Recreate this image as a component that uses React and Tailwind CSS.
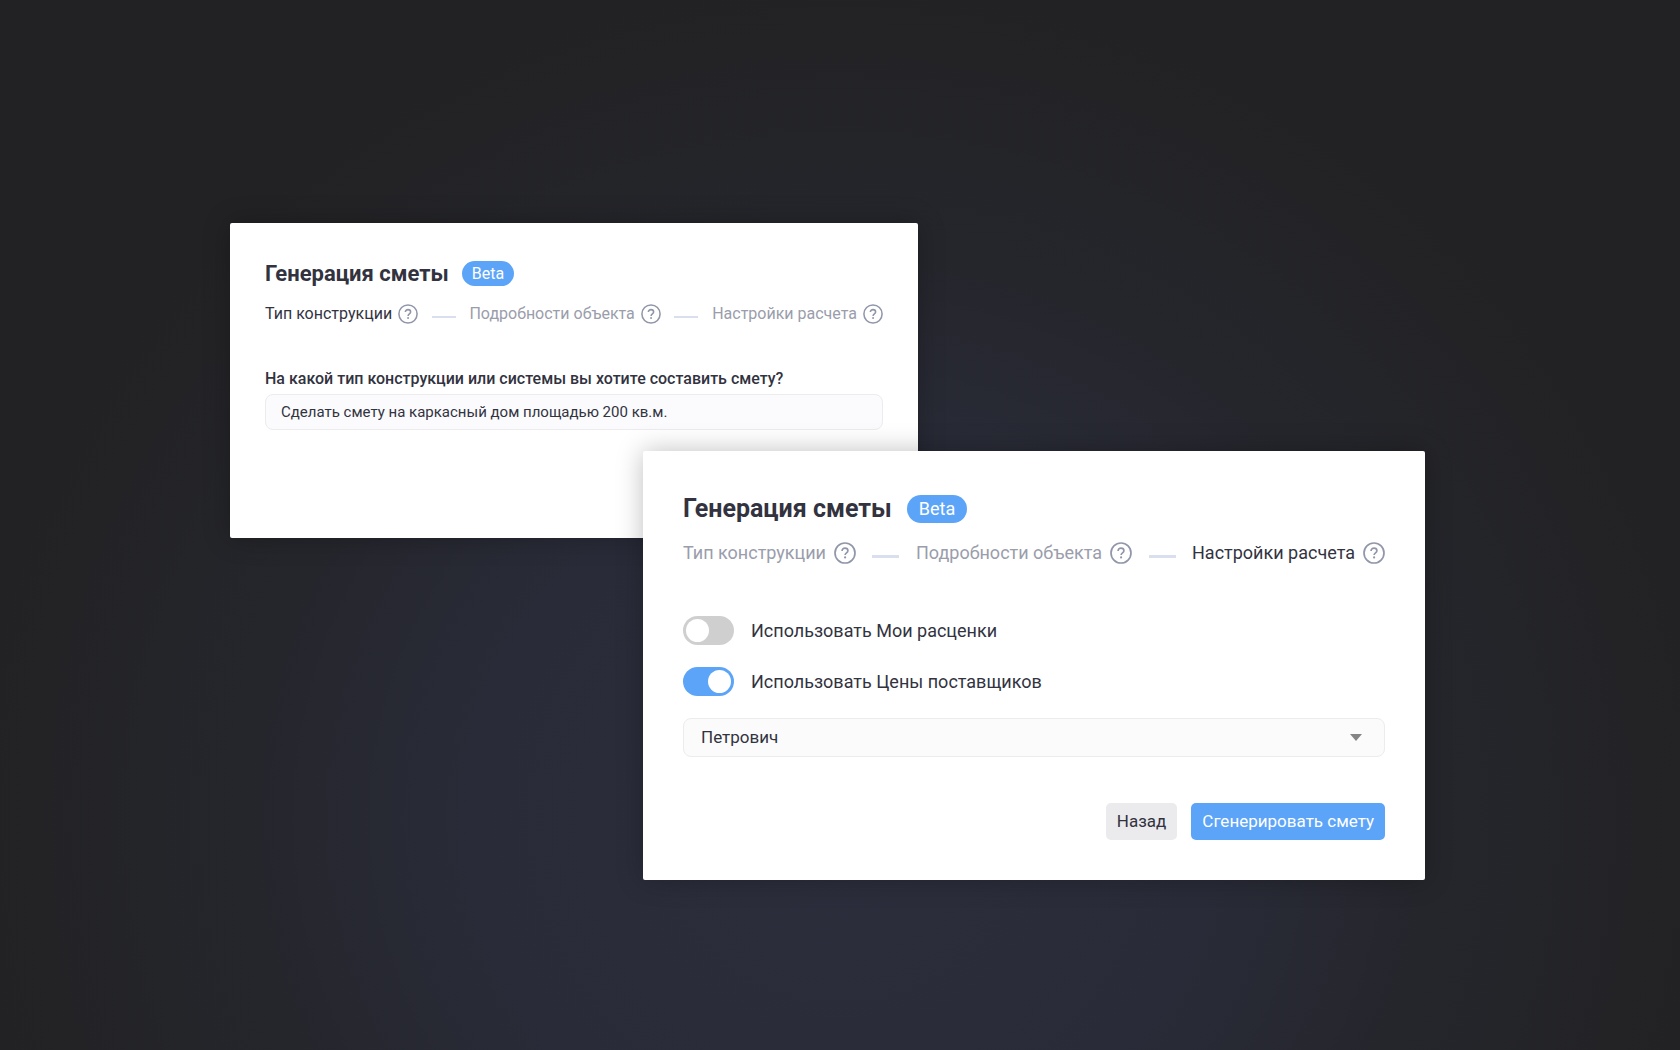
// App.jsx
import React, { useState } from 'react';

const steps = ['Тип конструкции', 'Подробности объекта', 'Настройки расчета'];

const HelpIcon = ({ className }) => (
  <svg className={className} viewBox="0 0 22 22" fill="none" stroke="#9197a9" aria-hidden="true">
    <circle cx="11" cy="11" r="10" strokeWidth="1.7" />
    <path d="M8.1 8.9c0-1.6 1.2-2.7 2.9-2.7s2.9 1 2.9 2.5c0 2.1-2.8 2.2-2.8 4.4" strokeWidth="1.7" />
    <circle cx="11.1" cy="15.4" r="1.1" fill="#9197a9" stroke="none" />
  </svg>
);

const Steps = ({ active, large }) => (
  <ol className="flex items-center justify-between">
    {steps.map((step, index) => (
      <React.Fragment key={step}>
        {/* Divider between the steps */}
        {index > 0 && (
          <li
            aria-hidden="true"
            className={`mt-1.5 bg-[#d9dfee] ${large ? 'h-[3px] w-[27px]' : 'h-0.5 w-6'}`}
          />
        )}
        <li
          className={`flex items-center whitespace-nowrap 
                      ${large ? 'gap-2 text-[18px] leading-6' : 'gap-1.5 text-[16px] leading-5'} 
                      ${index === active ? 'text-[#32333f]' : 'text-[#9a9dab]'}`}
        >
          {step}
          <button type="button" aria-label={`Подсказка: ${step}`}>
            <HelpIcon className={large ? 'size-[22px]' : 'size-5'} />
          </button>
        </li>
      </React.Fragment>
    ))}
  </ol>
);

const Toggle = ({ label, checked, onChange }) => (
  <label className="flex items-center gap-[17px] text-[18px] leading-[29px]">
    <input type="checkbox" role="switch" className="peer sr-only" checked={checked} onChange={onChange} />
    <span
      className="flex h-[29px] w-[51px] items-center rounded-full bg-[#cfcfcf] px-[3px] 
                 peer-checked:justify-end peer-checked:bg-[#5ca4f8]"
    >
      <span className="size-[23px] rounded-full bg-white" />
    </span>
    {label}
  </label>
);

const App = () => {
  const [query, setQuery] = useState('Сделать смету на каркасный дом площадью 200 кв.м.');
  const [ownPrices, setOwnPrices] = useState(false);
  const [supplierPrices, setSupplierPrices] = useState(true);

  return (
    <main
      className="grid min-h-screen grid-cols-[230fr_413fr_275fr_507fr_255fr] content-start 
                 bg-[#222224] bg-[radial-gradient(52%_80%_at_50%_78%,#2c2e3d_0%,#292b38_42%,#25262c_68%,#222224_100%)] 
                 pt-[223px] pb-16 font-[Roboto,sans-serif] text-[#32333f]"
    >
      <section className="col-span-2 col-start-2 row-start-1 min-h-[315px] rounded-[2px] bg-white px-[35px] pt-9 shadow-[0_0_27px_rgba(0,0,0,0.25)]">
        <div className="flex items-center gap-[13px]">
          <h2 className="text-[22px] leading-[29px] font-bold">Генерация сметы</h2>
          <span className="rounded-full bg-[#5ca4f8] px-2.5 text-[16px] leading-[25px] text-white">Beta</span>
        </div>
        <div className="mt-4">
          <Steps active={0} />
        </div>
        <label htmlFor="query" className="mt-[43px] block text-[16px] leading-6 font-medium">
          На какой тип конструкции или системы вы хотите составить смету?
        </label>
        <input
          id="query"
          type="text"
          className="mt-[3px] h-9 w-full rounded-lg border border-[#ececee] bg-[#fbfbfd] px-[15px] text-[15px]"
          value={query}
          onChange={(e) => setQuery(e.target.value)}
        />
      </section>

      <section className="col-span-2 col-start-3 row-start-2 -mt-[87px] rounded-[2px] bg-white px-10 pt-[42px] pb-10 shadow-[0_0_27px_rgba(0,0,0,0.25)]">
        <div className="flex items-center gap-[15px]">
          <h2 className="text-[25px] leading-8 font-bold">Генерация сметы</h2>
          <span className="rounded-full bg-[#5ca4f8] px-3 text-[18px] leading-7 text-white">Beta</span>
        </div>
        <div className="mt-4">
          <Steps active={2} large />
        </div>
        <div className="mt-[51px] flex flex-col gap-[22px]">
          <Toggle
            label="Использовать Мои расценки"
            checked={ownPrices}
            onChange={() => setOwnPrices(!ownPrices)}
          />
          <Toggle
            label="Использовать Цены поставщиков"
            checked={supplierPrices}
            onChange={() => setSupplierPrices(!supplierPrices)}
          />
        </div>
        <div className="relative mt-[22px]">
          <select
            aria-label="Поставщик"
            className="block h-[39px] w-full appearance-none rounded-lg border border-[#ececec] bg-[#fbfbfb] px-[17px] text-[17px]"
          >
            <option>Петрович</option>
          </select>
          <svg className="pointer-events-none absolute top-4 right-[23px] h-[7px] w-3" viewBox="0 0 12 7" aria-hidden="true">
            <path d="M0 0h12L6 7z" fill="#858585" />
          </svg>
        </div>
        <div className="mt-[46px] flex justify-end gap-3.5 text-[17px] leading-[37px]">
          <button type="button" className="rounded-[5px] bg-[#ebebee] px-[11px]">Назад</button>
          <button type="button" className="rounded-[5px] bg-[#5ca4f8] px-[11px] text-white">
            Сгенерировать смету
          </button>
        </div>
      </section>
    </main>
  );
};

export default App;
